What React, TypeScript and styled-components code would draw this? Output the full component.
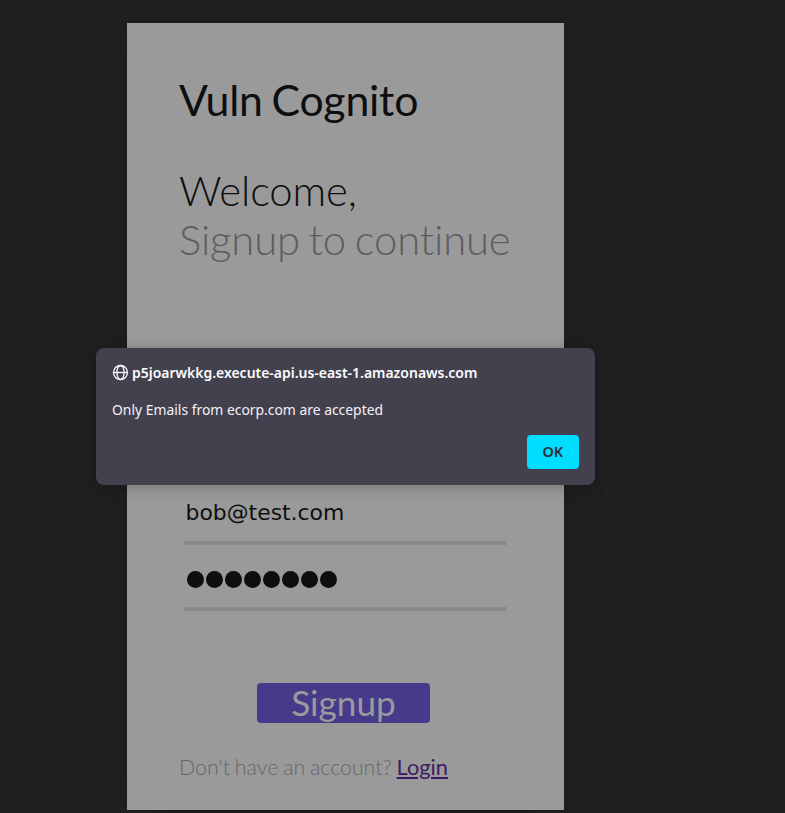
import React from "react";
import styled, { createGlobalStyle } from "styled-components";

const GlobalStyle = createGlobalStyle`
  * { box-sizing: border-box; }
  body { margin: 0; background: #202022; overflow: hidden; }
`;

const Page = styled.div`
  height: 813px;
  padding: 23px 0 0 127px;
  background: #202022;
  font-family: Lato, sans-serif;
  overflow: hidden;
`;

const Card = styled.main`
  display: flex;
  flex-direction: column;
  width: 437px;
  height: 787px;
  padding: 50px 52px 0;
  background: #9a9a9b;
  box-shadow: 0 0 40px rgba(0, 0, 0, 0.15);
`;

const Brand = styled.h1`
  margin: 0 0 39px;
  font-size: 42.8px;
  font-weight: 400;
  line-height: 54px;
  letter-spacing: -0.22px;
  word-spacing: -2px;
  color: #0e0e10;
  white-space: nowrap;
`;

const Greeting = styled.h2<{ $muted?: boolean }>`
  margin: 0;
  font-size: 41.8px;
  font-weight: 300;
  line-height: 49px;
  letter-spacing: ${(p) => (p.$muted ? "-0.12px" : "-0.1px")};
  word-spacing: -2.5px;
  font-variant-ligatures: none;
  color: ${(p) => (p.$muted ? "#5d5d5f" : "#0e0e10")};
  white-space: nowrap;
`;

const Form = styled.form`
  display: flex;
  flex-direction: column;
  margin: 215px 0 0 5px;
  width: 323px;
`;

const Field = styled.input`
  height: 66px;
  padding: 5px 2px 0 1.5px;
  border: 0;
  border-bottom: 4px solid #8a8a8b;
  border-radius: 0;
  outline: 0;
  background: transparent;
  color: #0e0e10;
  font: 21.9px/26px "DejaVu Sans", sans-serif;
`;

const Password = styled.div`
  display: flex;
  align-items: center;
  gap: 2.07px;
  height: 66px;
  padding: 7px 2.5px 0;
  border-bottom: 4px solid #8a8a8b;
`;

const Dot = styled.span`
  width: 17px;
  height: 17px;
  border-radius: 50%;
  background: #0e0e10;
`;

const SubmitButton = styled.button`
  align-self: flex-start;
  width: 173px;
  height: 40px;
  margin: 72px 0 0 73px;
  padding: 0 0 1px;
  border: 0;
  border-radius: 4px;
  background: #483a8b;
  color: #9a9a9b;
  font: 400 35.2px/39px Lato, sans-serif;
`;

const Footer = styled.p`
  margin: 31px 0 0;
  font-size: 21.3px;
  font-weight: 300;
  line-height: 26px;
  word-spacing: -0.9px;
  color: #67676a;
  white-space: nowrap;
`;

const LoginLink = styled.a`
  color: #3f1a61;
  font-size: 21.8px;
  font-weight: 400;
  text-decoration: underline;
`;

const Dialog = styled.section`
  position: absolute;
  left: 96px;
  top: 348px;
  display: flex;
  flex-direction: column;
  width: 499px;
  height: 137px;
  padding: 15px 16px 16px;
  border-radius: 8px;
  background: #44414e;
  color: #fbfbfe;
  box-shadow: 0 2px 14px rgba(0, 0, 0, 0.25);
  font: 15px/20px "Noto Sans", sans-serif;
`;

const Origin = styled.header`
  display: flex;
  align-items: center;
  gap: 3px;
  height: 18px;
  font-weight: 600;
  white-space: nowrap;

  svg {
    margin-top: 1px;
  }
`;

const OriginName = styled.span`
  transform: scaleX(0.93);
  transform-origin: left;
`;

const Message = styled.p`
  margin: 18px 0 0;
  color: #f2f2f6;
  white-space: nowrap;
  transform: scaleX(0.926);
  transform-origin: left;
`;

const OkButton = styled.button`
  align-self: flex-end;
  width: 52px;
  height: 34px;
  margin-top: 16px;
  padding: 0 0 2px;
  border: 0;
  border-radius: 4px;
  background: #00ddff;
  color: #2b2a33;
  font: 600 15px/32px "Noto Sans", sans-serif;
`;

const OkLabel = styled.span`
  display: inline-block;
  transform: scaleX(0.96);
`;

const Globe = () => (
  <svg width="17" height="17" viewBox="0 0 17 17" fill="none" stroke="#fbfbfe" strokeWidth="1.3">
    <circle cx="8.5" cy="8.5" r="7" />
    <ellipse cx="8.5" cy="8.5" rx="3.6" ry="7" />
    <path d="M1.5 8.5h14" />
  </svg>
);

export default function App() {
  return (
    <>
      <GlobalStyle />
      <Page>
        <Card>
          <Brand>Vuln Cognito</Brand>
          <Greeting>Welcome,</Greeting>
          <Greeting $muted>Signup to continue</Greeting>
          <Form>
            <Field defaultValue="bob@test.com" />
            <Password>
              {Array.from({ length: 8 }, (_, i) => (
                <Dot key={i} />
              ))}
            </Password>
            <SubmitButton type="button">Signup</SubmitButton>
          </Form>
          <Footer>
            Don't have an account? <LoginLink href="#">Login</LoginLink>
          </Footer>
        </Card>
      </Page>
      <Dialog role="alertdialog">
        <Origin>
          <Globe />
          <OriginName>p5joarwkkg.execute-api.us-east-1.amazonaws.com</OriginName>
        </Origin>
        <Message>Only Emails from ecorp.com are accepted</Message>
        <OkButton>
          <OkLabel>OK</OkLabel>
        </OkButton>
      </Dialog>
    </>
  );
}
